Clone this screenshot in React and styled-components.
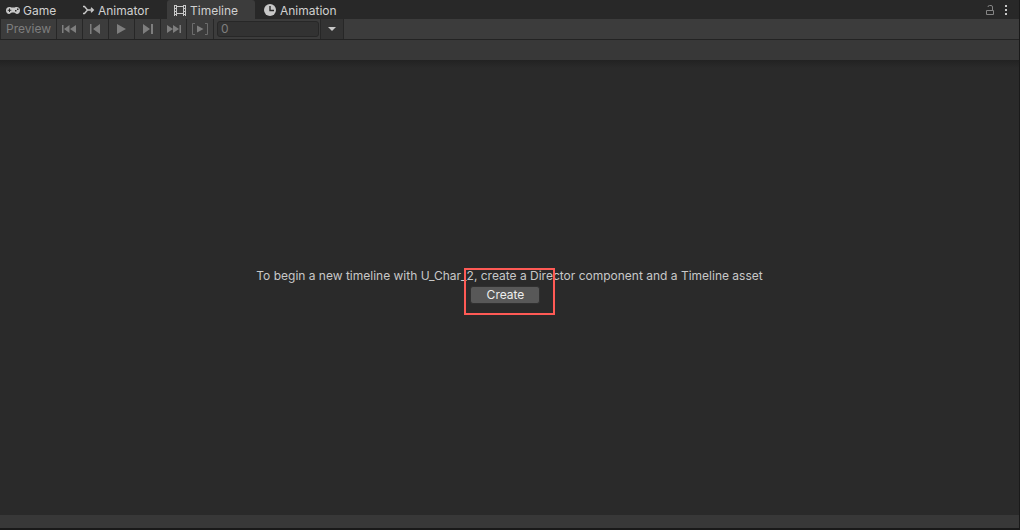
import React from "react";
import styled, { createGlobalStyle } from "styled-components";

const GlobalStyle = createGlobalStyle`
  * { box-sizing: border-box; }
  body {
    margin: 0;
    background: #191919;
    color: #c8c8c8;
    font-family: Inter, "Liberation Sans", sans-serif;
    font-size: 12px;
    line-height: 16px;
  }
  button, input { font: inherit; color: inherit; }
`;

const Window = styled.div`
  display: flex;
  flex-direction: column;
  min-height: 100vh;
  border-right: 1px solid #191919;
  border-bottom: 2px solid #191919;
`;

const TabBar = styled.div`
  display: flex;
  height: 19px;
  padding-right: 7px;
  background: #282828;
`;

const Tab = styled.button`
  display: flex;
  align-items: center;
  gap: 3px;
  width: ${(p) => p.$width}px;
  padding: 2px 0 0 6px;
  border: 0;
  border-radius: 3px 3px 0 0;
  background: ${(p) => (p.$active ? "#3c3c3c" : "transparent")};
  color: #d0d0d0;
  white-space: nowrap;

  &:last-of-type { padding-left: 8px; }
`;

const TabActions = styled.div`
  display: flex;
  align-items: center;
  gap: 5px;
  margin-left: auto;
`;

const IconButton = styled.button`
  display: flex;
  padding: 0;
  border: 0;
  background: none;
`;

const Toolbar = styled.div`
  display: flex;
  height: 21px;
  background: #3c3c3c;
  border-left: 1px solid #272727;
  border-bottom: 1px solid #232323;
`;

const ToolButton = styled.button`
  display: flex;
  align-items: center;
  justify-content: center;
  width: ${(p) => p.$width || 26}px;
  padding: 0;
  border: 0;
  border-right: 1px solid #272727;
  background: ${(p) => (p.$dark ? "#333333" : "#3c3c3c")};
  color: #7e7e7e;
`;

const FrameCell = styled.div`
  display: flex;
  align-items: center;
  padding: 0 1px 0 3px;
  border-right: 1px solid #272727;
`;

const FrameInput = styled.input`
  width: 102px;
  height: 16px;
  padding: 0 3px;
  border: 1px solid #272727;
  border-radius: 3px;
  background: #323232;
  color: #7e7e7e;
  outline: 0;
`;

const TrackHeader = styled.div`
  height: 20px;
  background: #383838;
`;

const Content = styled.main`
  display: flex;
  flex: 1;
  flex-direction: column;
  align-items: center;
  justify-content: center;
  background: linear-gradient(#222222, #2a2a2a 8px);
`;

const Prompt = styled.section`
  position: relative;
  display: flex;
  flex-direction: column;
  align-items: center;
  gap: 2px;
  padding-bottom: 4px;
`;

const Message = styled.p`
  margin: 0;
`;

const CreateButton = styled.button`
  width: 70px;
  height: 18px;
  margin-right: 8px;
  padding: 0;
  border: 1px solid #303030;
  border-radius: 3px;
  background: #585858;
  color: #eeeeee;
  line-height: 16px;
`;

const Highlight = styled.div`
  position: absolute;
  top: 0;
  left: calc(50% - 45px);
  width: 91px;
  height: 47px;
  border: 2px solid #ff5a55;
  pointer-events: none;
`;

const StatusBar = styled.footer`
  height: 13px;
  background: #383838;
`;

const GameIcon = () => (
  <svg width="14" height="14" viewBox="0 0 14 14">
    <path fill="#c8c8c8" fillRule="evenodd" d="M3.500 3C4.500 3 5 3.500 6 3.500h2C9 3.500 9.500 3 10.500 3A3.500 3.500 0 0 1 14 6.500C14 8.500 12.500 10 11 10c-1.300 0-2-1.500-3-1.500H6C5 8.500 4.300 10 3 10 1.500 10 0 8.500 0 6.500A3.500 3.500 0 0 1 3.500 3ZM3 4.500v1.300H1.700v1H3v1.300h1V6.800h1.300v-1H4V4.500ZM9 6v1.500h1.500V6Zm2-1.500V6h1.500V4.500Z" />
  </svg>
);

const AnimatorIcon = () => (
  <svg width="12" height="14" viewBox="0 0 12 14" fill="none" stroke="#c8c8c8" strokeWidth="1.400">
    <path d="M0 2.500h1.500L4.500 6H10.500M0 9.500h1.500L4.500 6M8 3.700L10.300 6 8 8.300" />
  </svg>
);

const TimelineIcon = () => (
  <svg width="14" height="14" viewBox="0 0 14 14" fill="none" stroke="#c8c8c8">
    <path d="M1.500 1v11M3.500 1v11M10.500 1v11M12.500 1v11M3.500 2.500h7M3.500 9.500h7M1 1.500h3M1 4.500h3M1 7.500h3M1 10.500h3M10 1.500h3M10 4.500h3M10 7.500h3M10 10.500h3" />
  </svg>
);

const ClockIcon = () => (
  <svg width="14" height="14" viewBox="0 0 14 14">
    <circle cx="7" cy="6" r="6" fill="#c8c8c8" />
    <path d="M7 2v4.500h4" fill="none" stroke="#282828" strokeWidth="1.400" />
  </svg>
);

const LockIcon = () => (
  <svg width="10" height="12" viewBox="0 0 10 12" fill="none" stroke="#858585">
    <path d="M1.500 6.500h7v4h-7zM7.500 6.500V3Q7.500 1.500 6 1.500H4.500Q3 1.500 3 3" />
  </svg>
);

const MenuIcon = () => (
  <svg width="12" height="12" viewBox="0 0 12 12" fill="#c8c8c8">
    <path d="M5 1h2v2H5zM5 5h2v2H5zM5 9h2v2H5z" />
  </svg>
);

const transportShapes = {
  first: "M0 3h1.500v8H0ZM7.500 3v8L2 7ZM14 3v8L8 7Z",
  previous: "M2 2h1.500v10H2ZM12 2v10L5 7Z",
  play: "M3 2v10l9-5Z",
  next: "M3 2v10l7-5ZM11 2h2v10h-2Z",
  last: "M1 3v8l6-4ZM7 3v8l6-4ZM13.500 3H15v8h-1.500Z",
};

const TransportIcon = ({ shape }) => (
  <svg width="16" height="14" viewBox="0 0 16 14" fill="#7e7e7e">
    <path d={transportShapes[shape]} />
  </svg>
);

const RangeIcon = () => (
  <svg width="16" height="14" viewBox="0 0 16 14">
    <path d="M3 1.500H.5v11H3M13 1.500h2.500v11H13" fill="none" stroke="#6c6c6c" />
    <path d="M5 3.500v7l6.500-3.500Z" fill="#7e7e7e" />
  </svg>
);

const tabs = [
  { label: "Game", width: 77, Icon: GameIcon },
  { label: "Animator", width: 90, Icon: AnimatorIcon },
  { label: "Timeline", width: 88, Icon: TimelineIcon, active: true },
  { label: "Animation", width: 96, Icon: ClockIcon },
];

const transport = [
  ["first", "Go to start"],
  ["previous", "Previous frame"],
  ["play", "Play"],
  ["next", "Next frame"],
  ["last", "Go to end"],
];

export default function App() {
  return (
    <Window>
      <GlobalStyle />
      <TabBar role="tablist">
        {tabs.map(({ label, width, Icon, active }) => (
          <Tab key={label} role="tab" aria-selected={!!active} $active={active} $width={width}>
            <Icon />
            {label}
          </Tab>
        ))}
        <TabActions>
          <IconButton aria-label="Lock"><LockIcon /></IconButton>
          <IconButton aria-label="More options"><MenuIcon /></IconButton>
        </TabActions>
      </TabBar>
      <Toolbar>
        <ToolButton $width={56}>Preview</ToolButton>
        {transport.map(([shape, label]) => (
          <ToolButton key={shape} aria-label={label}>
            <TransportIcon shape={shape} />
          </ToolButton>
        ))}
        <ToolButton $width={27} aria-label="Play range"><RangeIcon /></ToolButton>
        <FrameCell>
          <FrameInput aria-label="Current frame" defaultValue="0" />
        </FrameCell>
        <ToolButton $width={23} $dark aria-label="Frame options">
          <svg width="8" height="4" viewBox="0 0 8 4"><path d="M0 0h8L4 4Z" fill="#c8c8c8" /></svg>
        </ToolButton>
      </Toolbar>
      <TrackHeader />
      <Content>
        <Prompt>
          <Message>To begin a new timeline with U_Char_2, create a Director component and a Timeline asset</Message>
          <CreateButton>Create</CreateButton>
          <Highlight />
        </Prompt>
      </Content>
      <StatusBar />
    </Window>
  );
}
